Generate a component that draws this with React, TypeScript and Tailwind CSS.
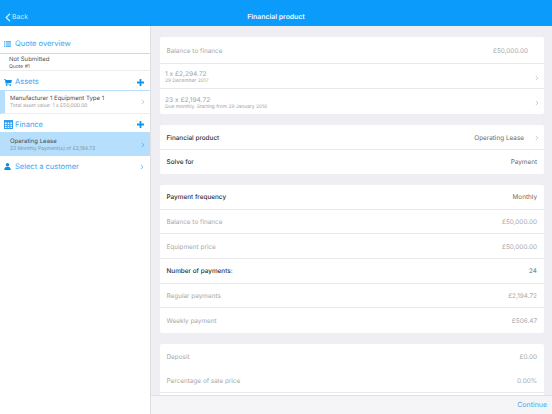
import React from "react";

const font = { fontFamily: '"Inter", "Lato", sans-serif' };

function Chevron({ color = "#b5b5b8", className = "" }: { color?: string; className?: string }) {
  return (
    <svg width="4" height="6" viewBox="0 0 4 6" className={`shrink-0 ${className}`}>
      <path d="M0.8 0.9 L2.9 3 L0.8 5.1" fill="none" stroke={color} strokeWidth="0.7" />
    </svg>
  );
}

function Plus() {
  return (
    <svg width="7" height="7" viewBox="0 0 7 7" className="shrink-0">
      <path d="M2.6 0h1.8v2.6H7v1.8H4.4V7H2.6V4.4H0V2.6h2.6z" fill="#0a97f5" />
    </svg>
  );
}

function ListIcon() {
  return (
    <svg width="7" height="6" viewBox="0 0 7 6" className="shrink-0">
      <path d="M0 0.2h1.4v1.2H0zM2 0.2H7v1.2H2zM0 2.4h1.4v1.2H0zM2 2.4H7v1.2H2zM0 4.6h1.4v1.2H0zM2 4.6H7v1.2H2z" fill="#2f9ff0" />
    </svg>
  );
}

function CartIcon() {
  return (
    <svg width="8" height="7" viewBox="0 0 9 8" className="shrink-0">
      <path d="M0 0h1.6l.3 1H9L8.2 4.6 2.6 5.2l.2.7H8v.7H2.1L1 .8H0z" fill="#0a8fe8" />
      <circle cx="2.9" cy="7.2" r="0.8" fill="#0a8fe8" />
      <circle cx="7.2" cy="7.2" r="0.8" fill="#0a8fe8" />
    </svg>
  );
}

function CalcIcon() {
  return (
    <svg width="9" height="9" viewBox="0 0 9 9" className="shrink-0">
      <path fillRule="evenodd" d="M0 0h9v9H0zM1 2.6v1.3h1.6V2.6zM3.7 2.6v1.3h1.6V2.6zM6.4 2.6v1.3H8V2.6zM1 4.7V6h1.6V4.7zM3.7 4.7V6h1.6V4.7zM6.4 4.7V6H8V4.7zM1 6.8v1.3h1.6V6.8zM3.7 6.8v1.3h1.6V6.8zM6.4 6.8v1.3H8V6.8z" fill="#2f9ff0" />
    </svg>
  );
}

function UserIcon() {
  return (
    <svg width="7" height="7" viewBox="0 0 8 8" className="shrink-0">
      <circle cx="4" cy="2" r="2" fill="#0a8fe8" />
      <path d="M0.3 8 C0.3 5.4 1.6 4.2 4 4.2 C6.4 4.2 7.7 5.4 7.7 8z" fill="#0a8fe8" />
    </svg>
  );
}

function Row({
  label,
  value,
  dark,
  chevron,
  border = true,
}: {
  label: string;
  value?: string;
  dark?: boolean;
  chevron?: boolean;
  border?: boolean;
}) {
  return (
    <div className={`h-[24.6px] ${chevron ? "pt-[2px] pr-[5px]" : "pt-[1px] pr-[7px]"} flex items-center pl-[6.5px] text-[6.4px] leading-[8px] ${border ? "border-b border-[#e9e9ee]" : ""}`}>
      <span className={dark ? "text-[#2c2c30] font-medium" : "text-[#a8a8ab]"}>{label}</span>
      <span className={`ml-auto ${dark ? "text-[#6a6a6e]" : "text-[#a8a8ab]"}`}>{value}</span>
      {chevron && <Chevron className="ml-[11px]" />}
    </div>
  );
}

function TwoLine({ top, bottom, border = true }: { top: string; bottom: string; border?: boolean }) {
  return (
    <div className={`h-[25px] pt-[3px] flex items-center pl-[5px] pr-[5px] ${border ? "border-b border-[#e9e9ee]" : ""}`}>
      <div>
        <div className="text-[6.6px] leading-[8px] text-[#a3a3a6]">{top}</div>
        <div className="text-[4.9px] leading-[7px] text-[#a3a3a6]">{bottom}</div>
      </div>
      <Chevron className="ml-auto" />
    </div>
  );
}

function SideHead({
  icon,
  title,
  plus,
  h,
  chevron,
  line = true,
}: {
  icon: React.ReactNode;
  title: string;
  plus?: boolean;
  h: string;
  chevron?: boolean;
  line?: boolean;
}) {
  return (
    <div className={`${h} flex items-center pl-[4px] pr-[6px] ${line ? "border-b-[1.5px] border-[#b7dffb]" : ""}`}>
      <span className="w-[11px] flex items-center">{icon}</span>
      <span className="text-[7.5px] text-[#3aa6f3]">{title}</span>
      <span className="ml-auto flex items-center">
        {plus && <Plus />}
        {chevron && <Chevron color="#3aa6f3" />}
      </span>
    </div>
  );
}

export default function App() {
  return (
    <div className="w-[552px] h-[414px] flex flex-col overflow-hidden bg-white [text-rendering:geometricPrecision]" style={font}>
      <header className="h-[26px] shrink-0 bg-[#0a9bfb] flex items-end pb-[4px] pl-[5px] pr-[5px] relative">
        <svg width="6" height="9" viewBox="0 0 6 9" className="mb-[0.5px]">
          <path d="M5 0.7 L1.2 4.5 L5 8.3" fill="none" stroke="#cfeafe" strokeWidth="1.3" />
        </svg>
        <span className="ml-[1px] text-[6.8px] leading-[10px] text-[#cfeafe]">Back</span>
        <span className="absolute left-0 right-0 bottom-[4px] text-center text-[6.9px] leading-[10px] font-semibold text-[#f2f9ff]">
          Financial product
        </span>
      </header>
      <div className="flex-1 flex min-h-0">
        <aside className="w-[151px] shrink-0 border-r border-[#dedee3] bg-white">
          <SideHead icon={<ListIcon />} title="Quote overview" h="h-[28px] pt-[9px]" />
          <div className="h-[17px] pl-[9px] pt-[2px] border-b border-[#eeeeee]">
            <div className="text-[6px] leading-[8px] text-[#55555a]">Not Submitted</div>
            <div className="text-[5px] leading-[7px] text-[#55555a]">Quote #1</div>
          </div>
          <SideHead icon={<CartIcon />} title="Assets" plus h="h-[20px] pt-[3px]" />
          <div className="h-[23px] flex items-center pl-[5px] pr-[5px] border-l-[5px] border-[#b7dffb] border-b border-b-[#eeeeee]">
            <div>
              <div className="text-[6px] leading-[8px] text-[#4a4a4e]">Manufacturer 1 Equipment Type 1</div>
              <div className="text-[5px] leading-[7px] text-[#a0a0a4]">Total asset value: 1 x £50,000.00</div>
            </div>
            <Chevron className="ml-auto" />
          </div>
          <SideHead icon={<CalcIcon />} title="Finance" plus h="h-[19px] pt-[3px]" />
          <div className="h-[23px] pt-[1px] flex items-center pl-[10px] pr-[5px] bg-[#b5dffc]">
            <div>
              <div className="text-[6px] leading-[8px] text-[#4a4f55]">Operating Lease</div>
              <div className="text-[5px] leading-[7px] text-[#7f95a5]">23 Monthly Payment(s) of £2,194.72</div>
            </div>
            <Chevron color="#3aa6f3" className="ml-auto" />
          </div>
          <SideHead icon={<UserIcon />} title="Select a customer" chevron h="h-[20px] pt-[1px]" line={false} />
        </aside>
        <main className="flex-1 min-w-0 flex flex-col bg-[#eeeef3]">
          <div className="flex-1 min-h-0 overflow-hidden pt-[11px] pl-[9px] pr-[8px] flex flex-col gap-[11px]">
            <section className="bg-white rounded-[2px] shrink-0">
              <div className="h-[27px] pt-[2px] flex items-center pl-[6.5px] pr-[16px] text-[6.4px] leading-[8px] text-[#a8a8ab] border-b border-[#e9e9ee]">
                <span>Balance to finance</span>
                <span className="ml-auto">£50,000.00</span>
              </div>
              <TwoLine top="1 x £2,294.72" bottom="29 December 2017" />
              <TwoLine top="23 x £2,194.72" bottom="Due monthly. Starting from 29 January 2018" border={false} />
            </section>
            <section className="bg-white rounded-[2px] shrink-0">
              <Row label="Financial product" value="Operating Lease" dark chevron />
              <Row label="Solve for" value="Payment" dark border={false} />
            </section>
            <section className="bg-white rounded-[2px] shrink-0">
              <Row label="Payment frequency" value="Monthly" dark />
              <Row label="Balance to finance" value="£50,000.00" />
              <Row label="Equipment price" value="£50,000.00" />
              <Row label="Number of payments:" value="24" dark />
              <Row label="Regular payments" value="£2,194.72" />
              <Row label="Weekly payment" value="£506.47" border={false} />
            </section>
            <section className="bg-white rounded-t-[2px] shrink-0">
              <Row label="Deposit" value="£0.00" border={false} />
              <Row label="Percentage of sale price" value="0.00%" />
              <div className="h-[24px]" />
            </section>
          </div>
          <footer className="h-[19px] shrink-0 bg-[#f5f5f7] border-t border-[#dedee3] flex items-center justify-end pr-[5px] text-[7px] text-[#3aa6f3]">
            Continue
          </footer>
        </main>
      </div>
    </div>
  );
}
